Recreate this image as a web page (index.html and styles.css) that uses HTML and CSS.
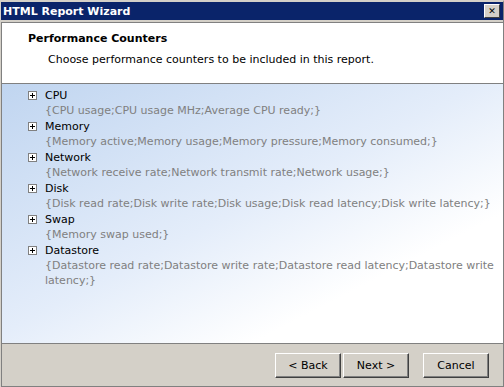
FILE: index.html
```html
<!DOCTYPE html>
<html lang="en">
<head>
    <meta charset="UTF-8">
    <title>HTML Report Wizard</title>
    <link rel="stylesheet" href="styles.css">
</head>
<body>
    <div class="window">
        <div class="titlebar">
            <span class="title">HTML Report Wizard</span>
            <span class="close">&#x2715;</span>
        </div>

        <div class="header">
            <h1>Performance Counters</h1>
            <p>Choose performance counters to be included in this report.</p>
        </div>

        <div class="counters">
            <div class="group">
                <div class="node"><span class="plus"></span>CPU</div>
                <div class="desc">{CPU usage;CPU usage MHz;Average CPU ready;}</div>
            </div>
            <div class="group">
                <div class="node"><span class="plus"></span>Memory</div>
                <div class="desc">{Memory active;Memory usage;Memory pressure;Memory consumed;}</div>
            </div>
            <div class="group">
                <div class="node"><span class="plus"></span>Network</div>
                <div class="desc">{Network receive rate;Network transmit rate;Network usage;}</div>
            </div>
            <div class="group">
                <div class="node"><span class="plus"></span>Disk</div>
                <div class="desc">{Disk read rate;Disk write rate;Disk usage;Disk read latency;Disk write latency;}</div>
            </div>
            <div class="group">
                <div class="node"><span class="plus"></span>Swap</div>
                <div class="desc">{Memory swap used;}</div>
            </div>
            <div class="group">
                <div class="node"><span class="plus"></span>Datastore</div>
                <div class="desc">{Datastore read rate;Datastore write rate;Datastore read latency;Datastore write latency;}</div>
            </div>
        </div>

        <div class="footer">
            <button class="btn">&lt; Back</button>
            <button class="btn">Next &gt;</button>
            <button class="btn cancel">Cancel</button>
        </div>
    </div>
</body>
</html>
```

FILE: styles.css
```css
body {
    margin: 0;
    font-family: "DejaVu Sans", Verdana, sans-serif;
    font-size: 11px;
    background-color: #d4d0c8;
}
.window {
    width: 504px;
    height: 387px;
    box-sizing: border-box;
    border-top: 2px solid #d4d0c8;
    border-left: 1px solid #d4d0c8;
    border-right: 1px solid #808080;
    display: flex;
    flex-direction: column;
}
.titlebar {
    height: 18px;
    background-color: #0a246a;
    color: white;
    display: flex;
    align-items: center;
    justify-content: space-between;
    padding: 0 3px 0 2px;
}
.title {
    font-weight: bold;
    font-size: 11px;
}
.close {
    width: 14px;
    height: 12px;
    background-color: #d4d0c8;
    color: black;
    font-size: 9px;
    font-weight: bold;
    line-height: 12px;
    text-align: center;
    border-top: 1px solid white;
    border-left: 1px solid white;
    border-right: 1px solid #404040;
    border-bottom: 1px solid #404040;
}
.header {
    background-color: white;
    border-top: 1px solid #808080;
    border-left: 1px solid #808080;
    border-bottom: 1px solid #808080;
    margin-top: 2px;
    height: 60px;
    padding-left: 26px;
}
.header h1 {
    font-size: 11px;
    font-weight: bold;
    margin: 9px 0 0 0;
    line-height: 14px;
}
.header p {
    margin: 7px 0 0 20px;
    line-height: 14px;
}
.counters {
    flex: 1;
    overflow: hidden;
    padding: 3px 0 0 26px;
    border-left: 1px solid #808080;
    background: linear-gradient(to bottom right, #c0d5f0 0%, #e4edfa 48%, #ffffff 75%);
}
.group {
    width: 470px;
}
.node {
    display: flex;
    align-items: center;
    height: 16px;
    color: black;
}
.plus {
    width: 7px;
    height: 7px;
    border: 1px solid #808080;
    background-color: white;
    margin-right: 8px;
    position: relative;
}
.plus::before {
    content: "";
    position: absolute;
    left: 1px;
    top: 3px;
    width: 5px;
    height: 1px;
    background-color: black;
}
.plus::after {
    content: "";
    position: absolute;
    left: 3px;
    top: 1px;
    width: 1px;
    height: 5px;
    background-color: black;
}
.desc {
    color: #808080;
    padding-left: 17px;
    line-height: 15px;
}
.footer {
    height: 42px;
    border-top: 1px solid #808080;
    border-left: 1px solid #808080;
    border-bottom: 1px solid #808080;
    display: flex;
    align-items: center;
    justify-content: flex-end;
    padding-right: 14px;
}
.btn {
    width: 66px;
    height: 25px;
    font-family: inherit;
    font-size: 11px;
    background-color: #d4d0c8;
    color: black;
    border-top: 1px solid white;
    border-left: 1px solid white;
    border-right: 1px solid #404040;
    border-bottom: 1px solid #404040;
    box-shadow: inset -1px -1px 0 #808080;
    margin-left: 2px;
    padding: 0;
}
.cancel {
    margin-left: 14px;
}
```
